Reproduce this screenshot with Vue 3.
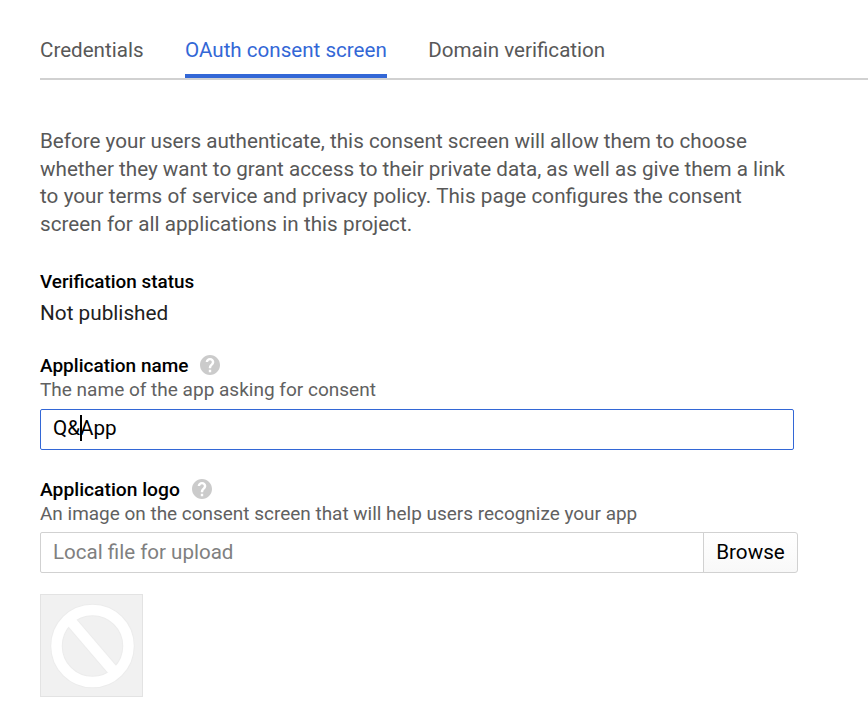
<script setup>
const tabs = ['Credentials', 'OAuth consent screen', 'Domain verification']
const active = 1
const helpPath =
  'M12 2C6.48 2 2 6.48 2 12s4.48 10 10 10 10-4.48 10-10S17.52 2 12 2zm1.2 17.2h-2.4v-2.4h2.4v2.4zm2.2-7.7l-.95.95C13.6 13.3 13.2 13.8 13.2 15.3h-2.4v-.8c0-1.1.45-2.1 1.17-2.83l1.24-1.26c.37-.36.59-.86.59-1.31 0-1-.8-1.8-1.8-1.8s-1.8.8-1.8 1.8H7.7c0-2.31 1.89-4.2 4.3-4.2s4.3 1.89 4.3 4.2c0 .88-.36 1.78-.9 2.4z'
</script>

<template>
  <main class="page">
    <nav class="tabs">
      <a v-for="(tab, i) in tabs" :key="tab" class="tab" :class="{ active: i === active }">{{ tab }}</a>
    </nav>

    <p class="intro">
      Before your users authenticate, this consent screen will allow them to choose<br />
      whether they want to grant access to their private data, as well as give them a link<br />
      <span class="loose">
        to your terms of service and privacy policy. This page configures the consent<br />
        screen for all applications in this project.
      </span>
    </p>

    <section class="status">
      <h2 class="label status-label">Verification status</h2>
      <div class="value">Not published</div>
    </section>

    <section class="field name-field">
      <h2 class="label">
        Application name
        <svg class="help" viewBox="0 0 24 24"><path :d="helpPath" /></svg>
      </h2>
      <div class="hint name-hint">The name of the app asking for consent</div>
      <div class="input focused"><span>Q&amp;</span><i class="caret"></i><span>App</span></div>
    </section>

    <section class="field">
      <h2 class="label logo-label">
        Application logo
        <svg class="help" viewBox="0 0 24 24"><path :d="helpPath" /></svg>
      </h2>
      <div class="hint">An image on the consent screen that will help users recognize your app</div>
      <div class="upload">
        <div class="input file">Local file for upload</div>
        <button class="browse">Browse</button>
      </div>
    </section>

    <div class="preview">
      <svg viewBox="0 0 101 101">
        <g fill="none" stroke="#ececec" stroke-width="12.5">
          <circle cx="51.5" cy="51" r="36" />
          <path d="M28 24L75 79" />
        </g>
        <g fill="none" stroke="#fff" stroke-width="10.5">
          <circle cx="51.5" cy="51" r="36" />
          <path d="M28 24L75 79" />
        </g>
      </svg>
    </div>
  </main>
</template>

<style>
body {
  background: #fff;
  overflow: hidden;
}
</style>

<style scoped>
.page {
  box-sizing: border-box;
  height: 712px;
  padding-left: 40px;
  font-family: Roboto, 'Liberation Sans', sans-serif;
  font-size: 20.65px;
  color: #212121;
}
.tabs {
  display: flex;
  gap: 41.5px;
  height: 78px;
  border-bottom: 2px solid #d1d1d1;
  font-size: 20.58px;
}
.tab {
  box-sizing: border-box;
  height: 78px;
  padding-top: 36px;
  line-height: 28px;
  color: #585858;
  white-space: nowrap;
}
.tab.active {
  color: #3367d6;
  border-bottom: 4px solid #3367d6;
}
.intro {
  margin: 48px 0 0;
  line-height: 27.6px;
  color: #585858;
  white-space: nowrap;
}
.loose {
  word-spacing: 0.22px;
}
.status {
  margin-top: 31.6px;
}
.label {
  display: flex;
  align-items: center;
  gap: 10px;
  height: 24px;
  margin: 0;
  font-size: 19px;
  font-weight: 500;
  line-height: 24px;
  color: #000;
}
.status-label {
  font-size: 18.9px;
}
.logo-label {
  gap: 10.5px;
  font-size: 19.25px;
}
.value {
  margin-top: 5px;
  font-size: 20.75px;
  line-height: 28px;
}
.field {
  margin-top: 28px;
}
.name-field {
  margin-top: 27px;
}
.help {
  width: 24px;
  height: 24px;
  margin-bottom: 1px;
  fill: #cbcbcb;
}
.hint {
  font-size: 18.97px;
  line-height: 24px;
  color: #616161;
  white-space: nowrap;
}
.name-hint {
  font-size: 19.03px;
}
.input {
  box-sizing: border-box;
  display: flex;
  align-items: center;
  width: 754px;
  height: 41px;
  padding: 0 12px 3px;
  margin-top: 7px;
  border: 1px solid #d1d1d1;
  border-radius: 2px;
  color: #000;
}
.input.focused {
  border-color: #3367d6;
}
.caret {
  width: 2px;
  height: 26px;
  margin: 0 -2px 0 0;
  background: #000;
}
.upload {
  display: flex;
  margin-top: 6.4px;
}
.input.file {
  width: 664px;
  margin: 0;
  padding-bottom: 2px;
  border-radius: 2px 0 0 2px;
  font-size: 20.55px;
  color: #808080;
}
.browse {
  box-sizing: border-box;
  width: 95px;
  height: 41px;
  margin: 0 0 0 -1px;
  padding: 0 0 2px;
  border: 1px solid #d1d1d1;
  border-radius: 0 3px 3px 0;
  background: linear-gradient(#fff, #f8f8f8);
  font: inherit;
  color: #000;
}
.preview {
  box-sizing: border-box;
  width: 103px;
  height: 103px;
  margin-top: 21px;
  border: 1px solid #e3e3e3;
  background: #f1f1f1;
}
.preview svg {
  display: block;
  width: 101px;
  height: 101px;
}
</style>
